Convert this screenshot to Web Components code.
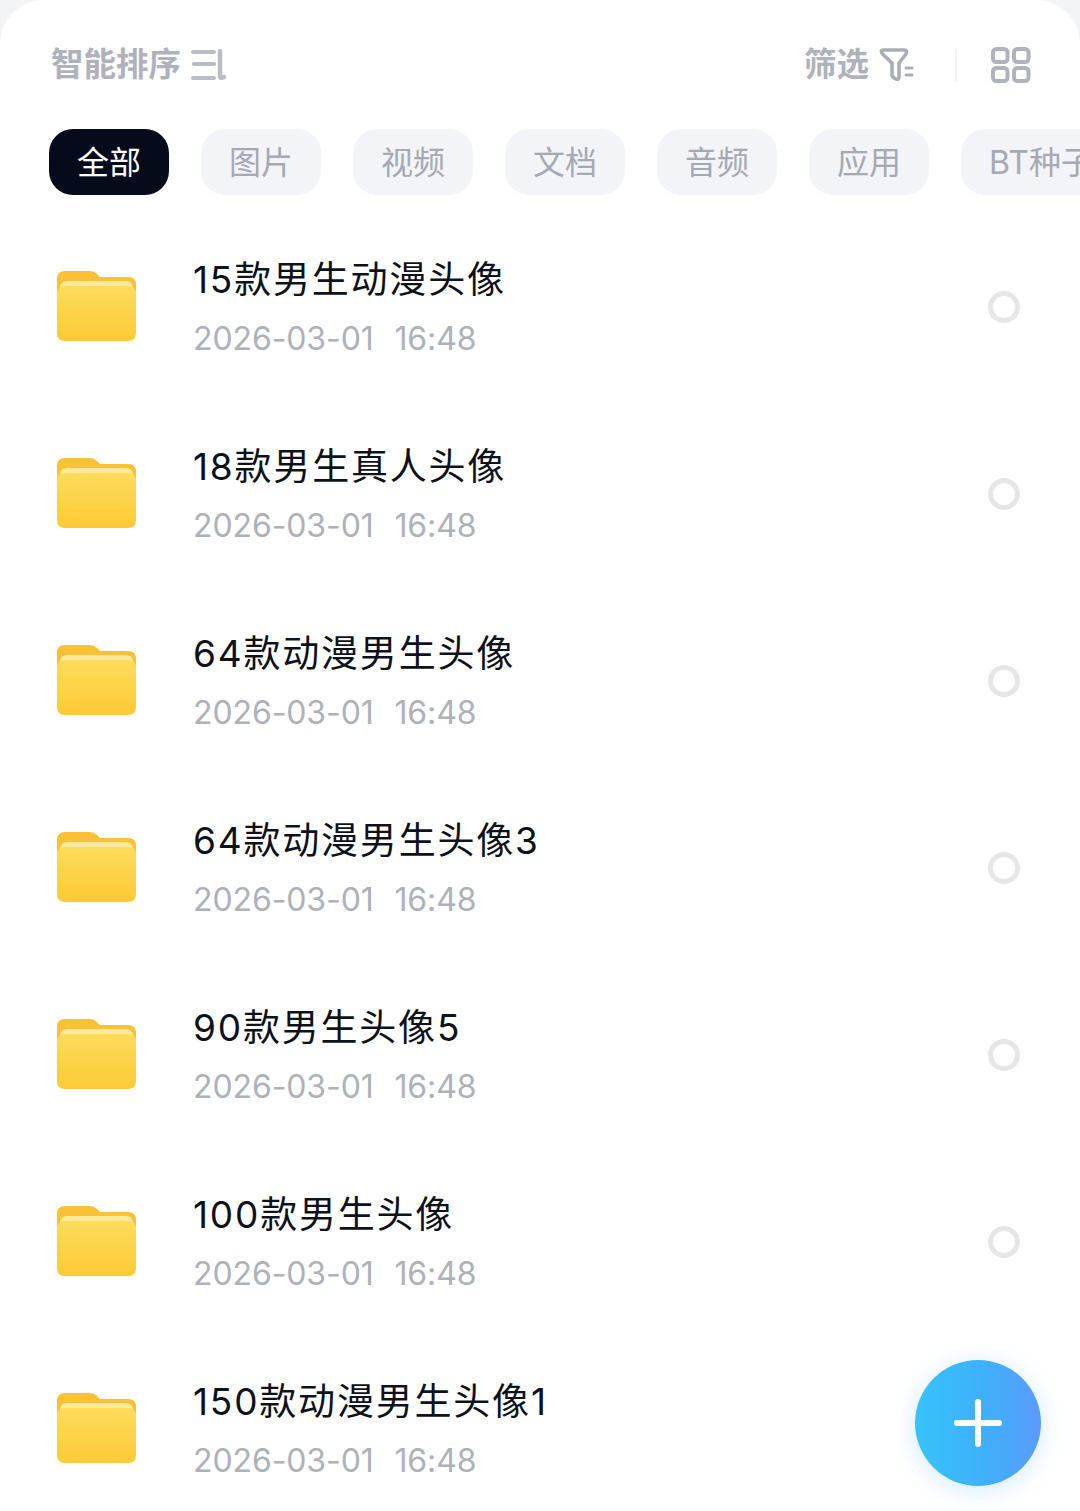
<!DOCTYPE html>
<html lang="zh">
<head>
<meta charset="utf-8">
<title>文件列表</title>
<style>
  html, body { margin: 0; height: 1511px; overflow: hidden; background: #f3f4f6; }
  body { font-family: Inter, "Noto Sans CJK SC", sans-serif; }
</style>
</head>
<body>
<file-page>
  <sort-bar></sort-bar>
  <pill-bar>
    <filter-pill active>全部</filter-pill>
    <filter-pill>图片</filter-pill>
    <filter-pill>视频</filter-pill>
    <filter-pill>文档</filter-pill>
    <filter-pill>音频</filter-pill>
    <filter-pill>应用</filter-pill>
    <filter-pill>BT种子</filter-pill>
  </pill-bar>
  <file-list>
    <file-row name="15款男生动漫头像"></file-row>
    <file-row name="18款男生真人头像"></file-row>
    <file-row name="64款动漫男生头像"></file-row>
    <file-row name="64款动漫男生头像3"></file-row>
    <file-row name="90款男生头像5"></file-row>
    <file-row name="100款男生头像"></file-row>
    <file-row name="150款动漫男生头像1" no-radio></file-row>
  </file-list>
  <add-button></add-button>
</file-page>

<script>
(function FileListPage() {

class FilePage extends HTMLElement {
  connectedCallback() {
    this.attachShadow({mode: 'open'});
    this.shadowRoot.innerHTML = `
      <style>
        :host {
          display: block;
          position: relative;
          width: 1080px;
          height: 1511px;
          overflow: hidden;
          background: #fff;
          border-radius: 44px 44px 0 0;
        }
      </style>
      <slot></slot>`;
  }
}

class SortBar extends HTMLElement {
  connectedCallback() {
    this.attachShadow({mode: 'open'});
    this.shadowRoot.innerHTML = `
      <style>
        :host {
          display: flex;
          align-items: center;
          height: 129px;
          box-sizing: border-box;
          padding: 0 49px 0 51px;
          font-size: 32.500px;
          font-weight: 700;
          color: #afb2bb;
        }
        .sort, .filter { display: flex; align-items: center; }
        .sort svg { margin-left: 10px; }
        .filter { margin-left: auto; }
        .filter svg { margin-left: 10px; }
        .rule { width: 2px; height: 32px; background: #f0f1f3; margin: 0 34px 0 40px; }
        span { line-height: 40px; }
      </style>
      <div class="sort">
        <span>智能排序</span>
        <svg width="36" height="32" viewBox="0 0 36 32" fill="none" stroke="#b9bcc3" stroke-width="4" stroke-linecap="round">
          <path d="M2 3h21M3 15h20M2 29h21"/>
          <path d="M29 2v25q0 3 4 1" stroke-width="4.500"/>
        </svg>
      </div>
      <div class="filter">
        <span>筛选</span>
        <svg width="36" height="34" viewBox="0 0 36 34" fill="none" stroke="#a9adb6" stroke-linecap="round" stroke-linejoin="round">
          <path stroke-width="3.600" d="M4 2h21q4 0 2 4l-7 9v14q0 3-3 2l-1-.5q-3-1.500-3-4V15L3.500 6Q1 2 4 2z"/>
          <path stroke-width="3" d="M27 20h6M27 27h6"/>
        </svg>
        <div class="rule"></div>
        <svg width="40" height="36" viewBox="0 0 40 36" fill="none" stroke="#b0b3bb" stroke-width="4" style="margin-left:0">
          <rect x="2" y="2" width="14.500" height="13" rx="3.500"/>
          <rect x="23" y="2" width="14.500" height="13" rx="3.500"/>
          <rect x="2" y="21" width="14.500" height="13" rx="3.500"/>
          <rect x="23" y="21" width="14.500" height="13" rx="3.500"/>
        </svg>
      </div>`;
  }
}

class PillBar extends HTMLElement {
  connectedCallback() {
    this.attachShadow({mode: 'open'});
    this.shadowRoot.innerHTML = `
      <style>
        :host {
          display: flex;
          gap: 32px;
          padding-left: 49px;
          white-space: nowrap;
          overflow: hidden;
        }
      </style>
      <slot></slot>`;
  }
}

class FilterPill extends HTMLElement {
  connectedCallback() {
    this.attachShadow({mode: 'open'});
    this.shadowRoot.innerHTML = `
      <style>
        :host {
          display: flex;
          flex: none;
          align-items: center;
          justify-content: center;
          box-sizing: border-box;
          min-width: 120px;
          height: 66px;
          padding: 2px 28px 0;
          border-radius: 24px;
          background: #f3f4f7;
          color: #a5a9b2;
          font-size: 32px;
          line-height: 40px;
        }
        :host([active]) {
          background: #050b1a;
          color: #fff;
        }
      </style>
      <slot></slot>`;
  }
}

class FileList extends HTMLElement {
  connectedCallback() {
    this.attachShadow({mode: 'open'});
    this.shadowRoot.innerHTML = `
      <style>
        :host { display: block; padding-top: 18px; }
      </style>
      <slot></slot>`;
  }
}

class FileRow extends HTMLElement {
  connectedCallback() {
    const name = this.getAttribute('name');
    this.attachShadow({mode: 'open'});
    this.shadowRoot.innerHTML = `
      <style>
        :host {
          display: flex;
          align-items: center;
          height: 187px;
          padding: 0 60px 0 57px;
        }
        svg { flex: none; width: 79px; height: 72px; display: block; margin-top: -1px; }
        .text { flex: 1; margin-left: 57px; min-width: 0; padding-top: 3px; }
        .name {
          font-size: 37px;
          line-height: 52px;
          letter-spacing: 1.8px;
          color: #0d1119;
          white-space: nowrap;
        }
        .date {
          margin-top: 10px;
          font-size: 32px;
          line-height: 46px;
          letter-spacing: -.1px;
          word-spacing: 1.5px;
          color: #aeb1b8;
          white-space: pre;
        }
        .radio {
          flex: none;
          width: 32px;
          height: 32px;
          box-sizing: border-box;
          border: 5px solid #e6e6e7;
          border-radius: 50%;
        }
        :host([no-radio]) .radio { visibility: hidden; }
      </style>
      <svg viewBox="0 0 79 72">
        <defs>
          <linearGradient id="body" x1="0" y1="0" x2="0" y2="1">
            <stop offset="0" stop-color="#fddc5c"/>
            <stop offset="1" stop-color="#fdca35"/>
          </linearGradient>
        </defs>
        <path fill="#fac137" d="M8 1h25q4 0 7 3l3 3h28q8 0 8 8v20H0V9q0-8 8-8z"/>
        <path fill="#fde99a" d="M10 11h59q6 0 7 6v10H3V17q1-6 7-6z"/>
        <path fill="url(#body)" d="M8 16h63q8 0 8 8v39q0 8-8 8H8q-8 0-8-8V24q0-8 8-8z"/>
      </svg>
      <div class="text">
        <div class="name">${name}</div>
        <div class="date">2026-03-01  16:48</div>
      </div>
      <div class="radio"></div>`;
  }
}

class AddButton extends HTMLElement {
  connectedCallback() {
    this.attachShadow({mode: 'open'});
    this.shadowRoot.innerHTML = `
      <style>
        :host {
          position: absolute;
          left: 915px;
          top: 1360px;
          width: 126px;
          height: 126px;
          display: flex;
          align-items: center;
          justify-content: center;
          border-radius: 50%;
          background: linear-gradient(90deg, #37c3fb 0%, #3fb0fb 55%, #5a9bfb 100%);
          box-shadow: 0 4px 24px rgba(70, 170, 250, .25);
        }
      </style>
      <svg width="48" height="48" viewBox="0 0 48 48" stroke="#fff" stroke-width="6" stroke-linecap="round">
        <path d="M24 3v42M3 24h42"/>
      </svg>`;
  }
}

customElements.define('file-page', FilePage);
customElements.define('sort-bar', SortBar);
customElements.define('pill-bar', PillBar);
customElements.define('filter-pill', FilterPill);
customElements.define('file-list', FileList);
customElements.define('file-row', FileRow);
customElements.define('add-button', AddButton);

})();
</script>
</body>
</html>
